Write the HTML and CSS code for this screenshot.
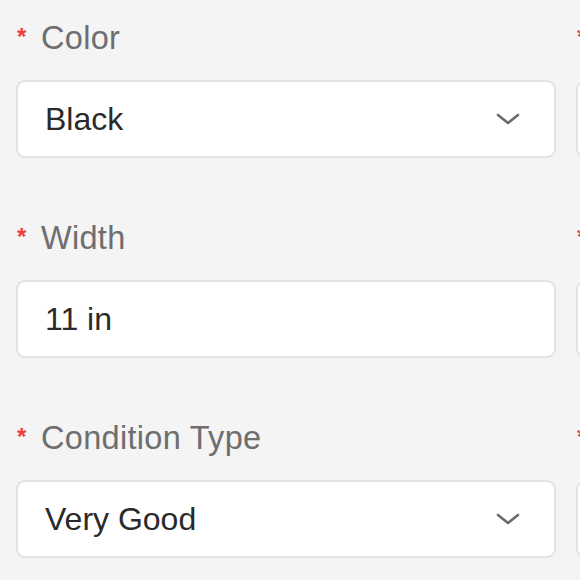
FILE: index.html
```html
<!DOCTYPE html>
<html lang="en">
<head>
<meta charset="utf-8">
<link rel="stylesheet" href="styles.css">
</head>
<body>
<div class="form">
  <div class="field">
    <div class="label"><span class="req">*</span>Color</div>
    <div class="control select"><span class="value">Black</span>
      <svg class="chev" viewBox="0 0 24 12" width="24" height="12"><path d="M2 2 L12 10 L22 2" fill="none" stroke="#6b6b6b" stroke-width="2.6" stroke-linecap="round" stroke-linejoin="round"/></svg>
    </div>
  </div>
  <div class="field">
    <div class="label"><span class="req">*</span>Size</div>
    <div class="control select"><span class="value"></span></div>
  </div>
  <div class="field">
    <div class="label"><span class="req">*</span>Width</div>
    <div class="control"><span class="value">11 in</span></div>
  </div>
  <div class="field">
    <div class="label"><span class="req">*</span>Height</div>
    <div class="control"><span class="value"></span></div>
  </div>
  <div class="field">
    <div class="label"><span class="req">*</span>Condition Type</div>
    <div class="control select"><span class="value">Very Good</span>
      <svg class="chev" viewBox="0 0 24 12" width="24" height="12"><path d="M2 2 L12 10 L22 2" fill="none" stroke="#6b6b6b" stroke-width="2.6" stroke-linecap="round" stroke-linejoin="round"/></svg>
    </div>
  </div>
  <div class="field">
    <div class="label"><span class="req">*</span>Quantity</div>
    <div class="control"><span class="value"></span></div>
  </div>
</div>
</body>
</html>
```
FILE: styles.css
```css
html, body {
  margin: 0;
  padding: 0;
  background: #f4f4f4;
  overflow: hidden;
}
body {
  font-family: "Liberation Sans", Arial, sans-serif;
  width: 580px;
  height: 580px;
}
.form {
  display: grid;
  grid-template-columns: 540px 540px;
  column-gap: 20px;
  row-gap: 58px;
  padding: 16px 0 0 16px;
  width: 1200px;
}
.field {
  display: flex;
  flex-direction: column;
  gap: 20px;
}
.label {
  height: 44px;
  line-height: 44px;
  font-size: 32.5px;
  letter-spacing: 0.3px;
  color: #6e6e6e;
  display: flex;
  align-items: center;
}
.req {
  color: #ee3b3b;
  font-size: 24px;
  font-weight: bold;
  width: 24px;
  margin-left: 1px;
  margin-top: -2px;
  letter-spacing: 0;
}
.control {
  box-sizing: border-box;
  height: 78px;
  background: #ffffff;
  border: 2px solid #e3e3e3;
  border-radius: 9px;
  display: flex;
  align-items: center;
  justify-content: space-between;
  padding: 0 34px 0 27px;
}
.value {
  font-size: 32px;
  color: #2a2a2a;
}
.chev {
  display: block;
}
```
